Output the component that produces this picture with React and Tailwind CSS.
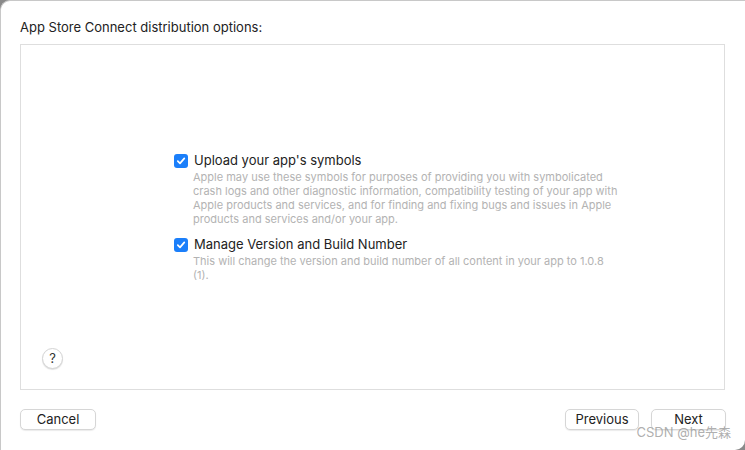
import React from "react";

const font = { fontFamily: 'Inter, "Liberation Sans", Arial, "Noto Sans CJK SC", sans-serif' };

function Check() {
  return (
    <span className="flex h-[14px] w-[14px] shrink-0 items-center justify-center rounded-[3px] bg-[#1b7ffa]">
      <svg width="10" height="10" viewBox="0 0 10 10" fill="none">
        <path d="M1.8 5.2 L4 7.4 L8.3 2.4" stroke="white" strokeWidth="1.7" strokeLinecap="round" strokeLinejoin="round" />
      </svg>
    </span>
  );
}

function Option({ title, lines }) {
  return (
    <div className="flex flex-col">
      <div className="flex items-center gap-[6px] h-[16px]">
        <Check />
        <span className="text-[13px] text-[#222] whitespace-nowrap">{title}</span>
      </div>
      <div className="pl-[19px] pt-[1px] text-[11px] leading-[14px] text-[#b3b3b3]">
        {lines.map((l, i) => (
          <div key={i} className="whitespace-nowrap">{l}</div>
        ))}
      </div>
    </div>
  );
}

function MacButton({ children, className = "" }) {
  return (
    <button className={`h-[21px] rounded-[5px] bg-white text-[13px] text-[#222] border border-[#d6d6d6] shadow-[0_1px_1px_rgba(0,0,0,0.08)] ${className}`}>
      {children}
    </button>
  );
}

export default function App() {
  return (
    <div className="w-[745px] h-[450px] bg-[#8a8a8a]" style={font}>
      <div className="relative flex h-full w-full flex-col bg-white rounded-tl-[10px] rounded-br-[10px] border-l border-t border-[#c8c8c8]">
        <div className="pl-[19px] pt-[18px] text-[13px] text-[#222] leading-[16px]">
          App Store Connect distribution options:
        </div>

        <div className="ml-[19px] mt-[9px] flex h-[346px] w-[705px] flex-col border border-[#dedede] bg-white">
          <div className="flex flex-1 items-center pl-[153px] pt-[41px]">
            <div className="flex flex-col gap-[11px]">
              <Option
                title="Upload your app's symbols"
                lines={[
                  "Apple may use these symbols for purposes of providing you with symbolicated",
                  "crash logs and other diagnostic information, compatibility testing of your app with",
                  "Apple products and services, and for finding and fixing bugs and issues in Apple",
                  "products and services and/or your app.",
                ]}
              />
              <Option
                title="Manage Version and Build Number"
                lines={[
                  "This will change the version and build number of all content in your app to 1.0.8",
                  "(1).",
                ]}
              />
            </div>
          </div>
          <div className="pl-[21px] pb-[20px]">
            <div className="flex h-[21px] w-[21px] items-center justify-center rounded-full bg-white border border-[#d4d4d4] shadow-[0_1px_1px_rgba(0,0,0,0.12)] text-[13px] text-[#333]">
              ?
            </div>
          </div>
        </div>

        <div className="mt-[19px] flex items-center pl-[19px] pr-[19px]">
          <MacButton className="w-[76px]">Cancel</MacButton>
          <div className="flex-1" />
          <MacButton className="w-[74px]">Previous</MacButton>
          <MacButton className="ml-[12px] w-[75px]">Next</MacButton>
        </div>

        <div className="absolute right-[14px] bottom-[8px] text-[13px] text-[#9a9a9a]/80 whitespace-nowrap">
          CSDN @he先森
        </div>
      </div>
    </div>
  );
}
